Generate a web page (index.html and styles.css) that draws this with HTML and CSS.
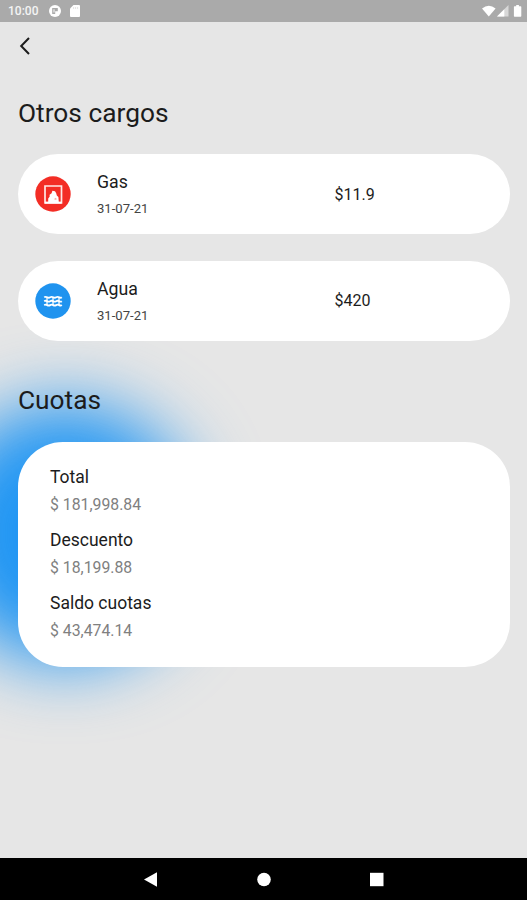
FILE: index.html
```html
<!DOCTYPE html>
<html lang="es">
<head>
<meta charset="utf-8">
<title>Otros cargos</title>
<link rel="stylesheet" href="styles.css">
</head>
<body>
<div class="screen">
  <header class="status">
    <span class="clock">10:00</span>
    <svg class="st-app" width="12" height="12" viewBox="0 0 12 12"><circle cx="6" cy="6" r="6" fill="#fff"/><path d="M3.2 3h5.6v3.2H6.2V9h-3z" fill="#aaa"/><path d="M4.4 4.2h1.2v3.4H4.4z" fill="#eee"/></svg>
    <svg class="st-card" width="10" height="12" viewBox="0 0 10 12"><path d="M3.5 0H9a1 1 0 0 1 1 1v10a1 1 0 0 1-1 1H1a1 1 0 0 1-1-1V3.5z" fill="#fff"/><path d="M3.6 2v2M5.6 2v2M7.6 2v2" stroke="#ddd" stroke-width=".8"/></svg>
    <svg class="st-right" width="41" height="13" viewBox="0 0 41 13"><path d="M1 3.4Q7.8-1.8 14.6 3.4L7.8 11.5z" fill="#fff"/><path d="M27.5 0v11.5H16z" fill="#d8d8d8"/><path d="M23.3 4.2v7.3H16z" fill="#fff"/><path d="M33.5 1.2h1.7V0h2.7v1.2h1.7a.7.7 0 0 1 .7.7v9.2a.7.7 0 0 1-.7.7h-6a.7.7 0 0 1-.7-.7V1.9a.7.7 0 0 1 .6-.7z" fill="#fff"/></svg>
  </header>
  <main class="content">
    <div class="glow"></div>
    <svg class="back" width="12" height="20" viewBox="0 0 12 20"><path d="M10 2L2.2 10l7.8 8" fill="none" stroke="#1c1c1c" stroke-width="2"/></svg>
    <h1 class="title">Otros cargos</h1>
    <section class="charge">
      <svg class="icon" width="36" height="36" viewBox="0 0 36 36"><circle cx="18" cy="18" r="17.7" fill="#f32d25"/><path d="M10 10h16.5v17H10z" fill="none" stroke="#ffe8e5" stroke-width="1.7"/><path d="M10 26.6h16.5" stroke="#fff" stroke-width="2"/><path d="M13.2 26v-3.6l1.4-1.6v-2l2-1.6.8-2.4 2.6.4 1.2 2 .6 2.4 1.6 1.4.4 5z" fill="#fff"/><path d="M19.5 22.5l1-.8 1 .8v1.2h-2z" fill="#f7b2ad"/></svg>
      <div class="info"><div class="name">Gas</div><div class="date">31-07-21</div></div>
      <div class="price">$11.9</div>
    </section>
    <section class="charge">
      <svg class="icon" width="36" height="36" viewBox="0 0 36 36"><circle cx="18" cy="18" r="17.7" fill="#1f93ef"/><path d="M9.2 14.3q1.5-.9 3 0t3 0 3 0 3 0 3 0 2.6 0M9.2 18.2q1.5-.9 3 0t3 0 3 0 3 0 3 0 2.6 0M9.2 22.1q1.5-.9 3 0t3 0 3 0 3 0 3 0 2.6 0" fill="none" stroke="#fff" stroke-width="1.9"/><path d="M12 14v8M18 14v8M24 14v8" stroke="#fff" stroke-width="2" opacity=".65"/></svg>
      <div class="info"><div class="name">Agua</div><div class="date">31-07-21</div></div>
      <div class="price">$420</div>
    </section>
    <h2 class="title fees-title">Cuotas</h2>
    <dl class="fees">
      <dt>Total</dt><dd>$ 181,998.84</dd>
      <dt>Descuento</dt><dd>$ 18,199.88</dd>
      <dt>Saldo cuotas</dt><dd>$ 43,474.14</dd>
    </dl>
  </main>
  <nav class="navbar">
    <svg width="527" height="42" viewBox="0 0 527 42"><path d="M144 21.5l13-7.3v14.6z" fill="#fff"/><circle cx="264" cy="21.5" r="6.8" fill="#fff"/><path d="M370 14.8h13.5v13.4H370z" fill="#fff"/></svg>
  </nav>
</div>
</body>
</html>
```
FILE: styles.css
```css
body { margin: 0; font-family: Roboto, sans-serif; color: #1c1c1c; }
.screen { width: 527px; height: 900px; display: flex; flex-direction: column; background: #e6e6e6; overflow: hidden; }
.status { height: 22px; box-sizing: border-box; flex: none; display: flex; align-items: center; padding: 0 5px 0 8px; background: #aaa; color: #f4f4f4; }
.clock { width: 41px; font-size: 12px; font-weight: 500; }
.st-card { margin-left: 9px; }
.st-right { margin-left: auto; }
.content { flex: 1; position: relative; overflow: hidden; padding: 0 17px 0 18px; }
.glow { position: absolute; left: -65px; top: 381px; width: 260px; height: 260px; border-radius: 50%; background: #2196f3; filter: blur(35px); }
.back, .title, .charge, .fees { position: relative; }
.back { display: block; margin: 14px 0 0 1px; }
.title { margin: 41px 0 25.3px; font-size: 26.3px; line-height: 32px; font-weight: 400; }
.charge { height: 80px; margin-bottom: 26.5px; display: flex; align-items: center; border-radius: 40px; background: #fff; }
.icon { margin-left: 17px; flex: none; }
.info { width: 237.5px; margin-left: 26px; padding-top: 2px; }
.name { font-size: 17.7px; line-height: 24px; }
.date { margin-top: 4px; font-size: 13.1px; line-height: 22px; color: #444; }
.price { font-size: 16px; }
.fees-title { margin: 43px 0 26px; }
.fees { height: 225px; box-sizing: border-box; margin: 0; padding: 21px 32px; border-radius: 45px; background: #fff; }
.fees dt { font-size: 17.5px; line-height: 28px; }
.fees dd { margin: 0 0 7.3px; font-size: 15.8px; line-height: 28px; color: #808080; }
.navbar { height: 42px; flex: none; background: #000; }
.navbar svg { display: block; }
```
